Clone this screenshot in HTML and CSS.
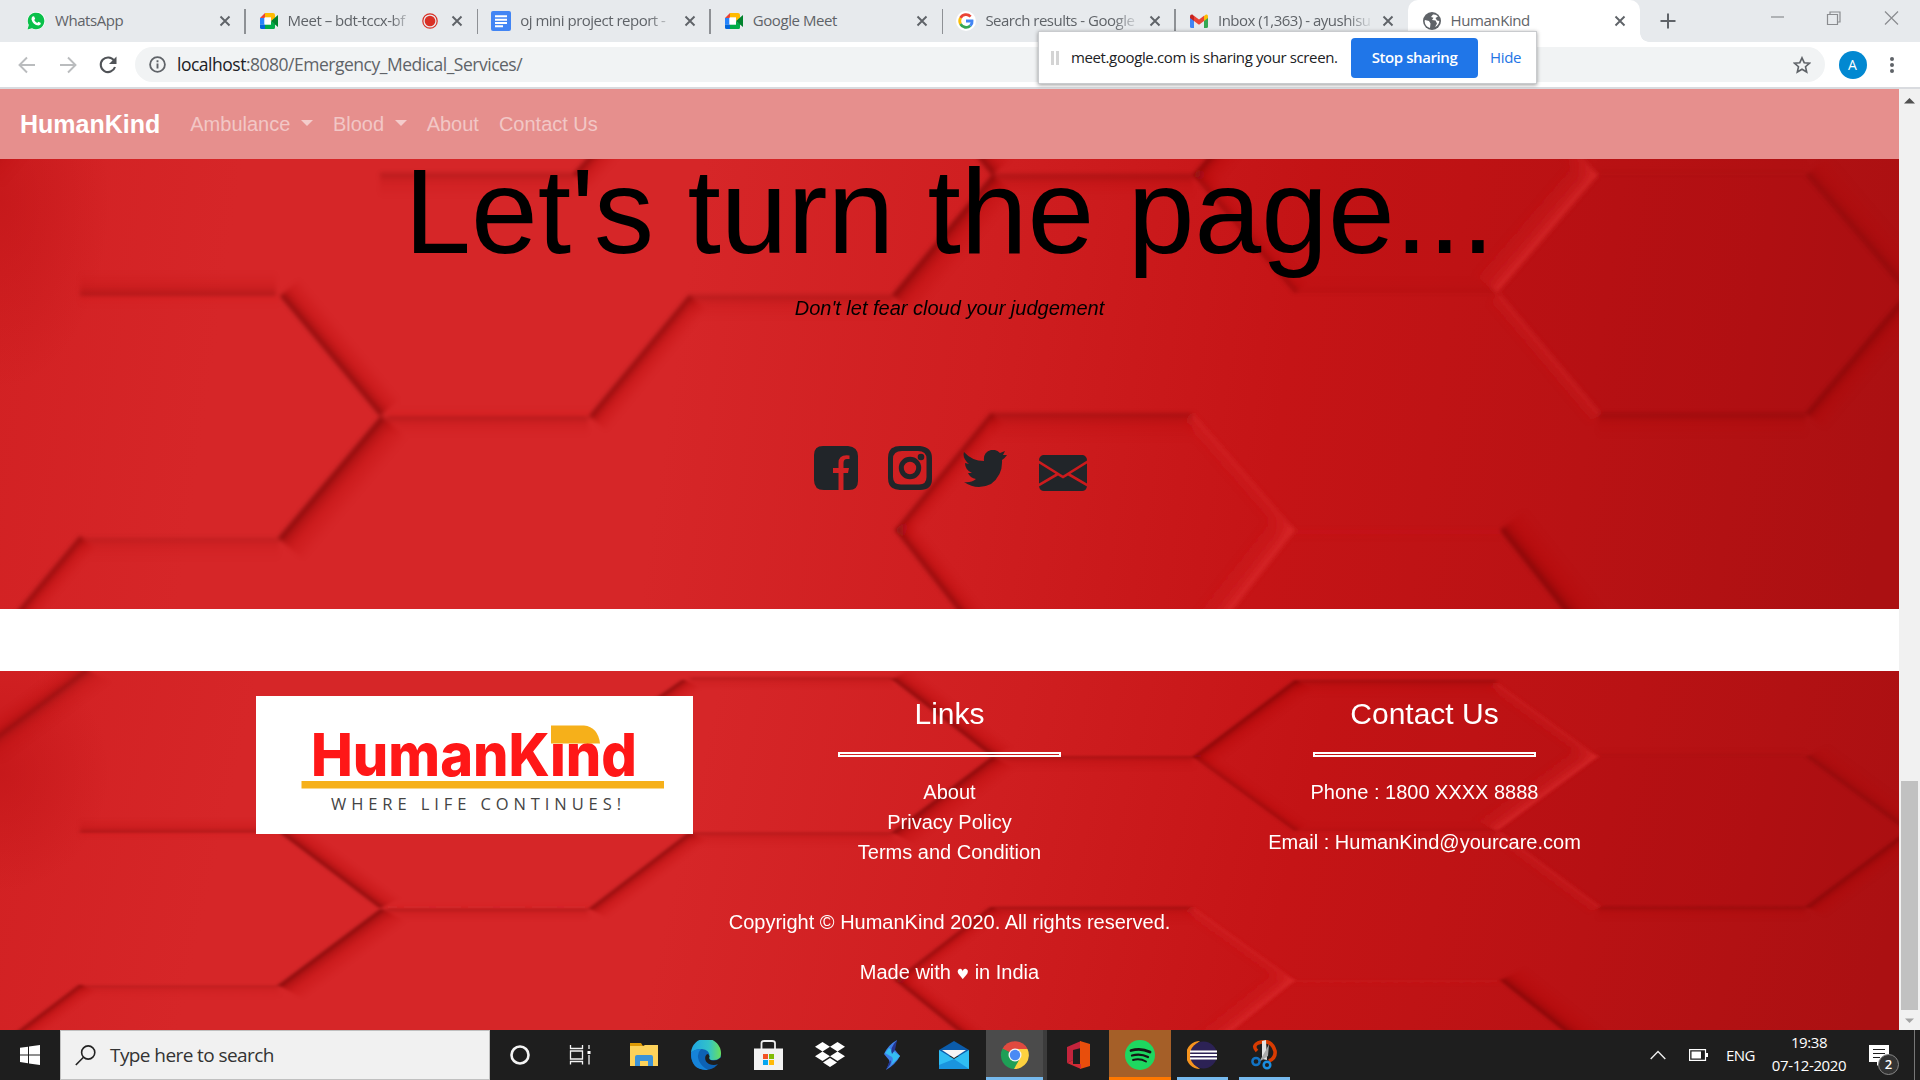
FILE: index.html
```html
<!DOCTYPE html>
<html lang="en">
<head>
<meta charset="utf-8">
<title>HumanKind</title>
<link rel="stylesheet" href="styles.css">
</head>
<body>
<svg class="defs" width="0" height="0" aria-hidden="true">
  <defs>
    <linearGradient id="base" gradientUnits="userSpaceOnUse" x1="0" y1="250" x2="1880" y2="520">
      <stop offset="0" stop-color="#d22123"/><stop offset=".12" stop-color="#d62628"/><stop offset=".36" stop-color="#d62628"/>
      <stop offset=".52" stop-color="#cf1e20"/><stop offset=".68" stop-color="#c51416"/><stop offset=".84" stop-color="#b91214"/><stop offset="1" stop-color="#ab1012"/>
    </linearGradient>
    <radialGradient id="corner" gradientUnits="userSpaceOnUse" cx="0" cy="0" r="1" gradientTransform="translate(0 200) scale(110 190)">
      <stop offset="0" stop-color="#b90f12" stop-opacity=".45"/><stop offset="1" stop-color="#b90f12" stop-opacity="0"/>
    </radialGradient>
    <linearGradient id="gs" x1="0" y1="0" x2="0" y2="1">
      <stop offset="0" stop-color="#5c0a08" stop-opacity=".72"/><stop offset=".22" stop-color="#8f0a0b" stop-opacity=".46"/>
      <stop offset=".5" stop-color="#b00b0e" stop-opacity=".25"/><stop offset="1" stop-color="#b80c10" stop-opacity="0"/>
    </linearGradient>
    <linearGradient id="gl" x1="0" y1="0" x2="0" y2="1">
      <stop offset="0" stop-color="#e53436" stop-opacity=".6"/><stop offset=".35" stop-color="#dc2a2c" stop-opacity=".28"/><stop offset="1" stop-color="#d82426" stop-opacity="0"/>
    </linearGradient>
    <filter id="soft" x="-5%" y="-5%" width="110%" height="110%"><feGaussianBlur stdDeviation="2"/></filter>
    <rect id="s" width="1" height="1" fill="url(#gs)"/>
    <rect id="l" width="1" height="1" fill="url(#gl)"/>
    <g id="hexes">
      <rect y="39" width="1899" height="570" fill="url(#base)"/>
      <rect y="39" width="200" height="450" fill="url(#corner)"/>
      <path d="M1295 57H1497L1598 175L1497 293H1295L1193 175Z" fill="#b80a0e" opacity=".08"/>
      <path d="M1598 175H1806L1907 293L1806 413H1598L1497 293Z" fill="#a80a0d" opacity=".12"/>
      <g filter="url(#soft)">
        <use href="#s" transform="matrix(-100 -120 20 -17 380 416)"/>
        <use href="#s" transform="matrix(103 -122 26 22 278 538)"/>
        <use href="#s" opacity=".3" transform="matrix(199 0 0 22 80 538)"/>
        <use href="#s" transform="matrix(100 -120 16 13 -20 656)"/>
        <use href="#s" opacity=".5" transform="matrix(-196 0 0 -24 276 296)"/>
        <use href="#s" opacity=".45" transform="matrix(202 0 0 20 386 416)"/>
        <use href="#s" transform="matrix(100 -121 18 15 589 416)"/>
        <use href="#s" opacity=".4" transform="matrix(203 0 0 24 690 295)"/>
        <use href="#s" transform="matrix(100 -120 24 20 892 295)"/>
        <use href="#s" opacity=".4" transform="matrix(195 0 0 24 380 173)"/>
        <use href="#s" transform="matrix(110 -122 18 15 573 174)"/>
        <use href="#s" opacity=".4" transform="matrix(203 0 0 20 690 49)"/>
        <use href="#s" transform="matrix(96 -117 14 12 895 530)"/>
        <use href="#s" transform="matrix(-94 -120 16 -13 989 650)"/>
        <use href="#s" opacity=".5" transform="matrix(202 0 0 28 991 413)"/>
        <use href="#s" opacity=".5" transform="matrix(202 0 0 24 991 174)"/>
        <use href="#s" transform="matrix(-100 -123 20 -17 992 175)"/>
        <use href="#s" transform="matrix(102 -122 20 16 1193 175)"/>
        <use href="#s" opacity=".7" transform="matrix(-102 -118 14 -12 1295 293)"/>
        <use href="#s" opacity=".15" transform="matrix(202 0 0 -16 1295 293)"/>
        <use href="#s" opacity=".5" transform="matrix(202 0 0 28 1295 53)"/>
        <use href="#s" opacity=".9" transform="matrix(-95 -120 26 -21 1595 650)"/>
        <use href="#s" opacity=".5" transform="matrix(208 0 0 24 1598 413)"/>
        <use href="#s" opacity=".8" transform="matrix(101 -120 20 17 1806 413)"/>
        <use href="#s" opacity=".55" transform="matrix(-101 -118 24 -20 1907 293)"/>
        <use href="#s" opacity=".15" transform="matrix(208 0 0 -14 1598 174)"/>
        <use href="#s" opacity=".5" transform="matrix(108 -128 24 20 -20 166)"/>
        <use href="#s" opacity=".7" transform="matrix(-108 128 -20 -17 88 38)"/>
        <use href="#l" opacity=".6" transform="matrix(102 117 -14 12 1193 413)"/>
        <use href="#l" transform="matrix(-102 130 -24 -19 1295 530)"/>
        <use href="#l" transform="matrix(-101 118 -24 -20 1598 175)"/>
        <use href="#l" opacity=".6" transform="matrix(101 120 -14 12 1500 293)"/>
        <use href="#l" opacity=".6" transform="matrix(101 118 -14 12 1497 57)"/>
        <use href="#l" opacity=".3" transform="matrix(205 0 0 10 1295 530)"/>
        <use href="#l" opacity=".2" transform="matrix(199 0 0 10 80 297)"/>
        <use href="#l" opacity=".25" transform="matrix(202 0 0 -8 388 415)"/>
      </g>
    </g>
    <symbol id="x" viewBox="0 0 12 12"><path d="M1.5 1.5l9 9m0-9l-9 9" stroke="#5f6368" stroke-width="1.9" fill="none"/></symbol>
    <symbol id="meet" viewBox="0 0 20 20">
      <path d="M6 2H14a2 2 0 0 1 2 2V7L12 10V6.5H6Z" fill="#ffba00"/><path d="M1 7L6 2V7Z" fill="#ea4335"/>
      <path d="M1 7H5.5V13.5H1Z" fill="#2684fc"/><path d="M1 13.5H6V18H2.500a1.500 1.500 0 0 1-1.500-1.500Z" fill="#0066da"/>
      <path d="M6 13.500H12V10L16 13V16.500a1.500 1.500 0 0 1-1.500 1.500H6Z" fill="#00ac47"/><path d="M12 10L19 4V16L16 13.500Z" fill="#00832d"/>
      <path d="M5.500 6.500H12V13.500H5.500Z" fill="#fff"/>
    </symbol>
  </defs>
</svg>

<div class="screen">
  <header class="tabs">
    <div class="tab">
      <svg class="fav" viewBox="0 0 20 20"><path d="M1 19L2.400 14.200A9 9 0 1 1 6 17.700Z" fill="#fff"/><path d="M1.500 18.500L2.800 14A8.300 8.300 0 1 1 6 17.200Z" fill="#0ac04a"/><path d="M6.500 5.500l1.500-.3 1.200 2.600-1 1.300q1 2 3 2.900l1.200-1.200 2.500 1.200q0 2.300-2.400 2.500Q7 14 5.500 8.500 5.400 6.500 6.500 5.500Z" fill="#fff"/></svg>
      <span class="title">WhatsApp</span><svg class="close"><use href="#x"/></svg>
    </div>
    <div class="tab sep">
      <svg class="fav"><use href="#meet"/></svg>
      <span class="title fade">Meet – bdt-tccx-bf</span>
      <svg class="rec" viewBox="0 0 16 16"><circle cx="8" cy="8" r="7.200" fill="none" stroke="#d93025" stroke-width="1.200"/><circle cx="8" cy="8" r="5.300" fill="#d93025"/></svg>
      <svg class="close"><use href="#x"/></svg>
    </div>
    <div class="tab sep">
      <svg class="fav" viewBox="0 0 20 20"><rect width="20" height="20" rx="2" fill="#4285f4"/><path d="M4 5.200h12M4 8.700h12M4 12h12M4 15.300h8" stroke="#fff" stroke-width="1.900"/></svg>
      <span class="title fade">oj mini project report -</span><svg class="close"><use href="#x"/></svg>
    </div>
    <div class="tab sep">
      <svg class="fav"><use href="#meet"/></svg>
      <span class="title">Google Meet</span><svg class="close"><use href="#x"/></svg>
    </div>
    <div class="tab sep">
      <svg class="fav" viewBox="0 0 20 20"><circle cx="10" cy="10" r="10" fill="#fff"/><g fill="none" stroke-width="2.800"><path d="M14.600 5.600A6.300 6.300 0 0 0 4.500 7" stroke="#ea4335"/><path d="M4.500 7A6.300 6.300 0 0 0 4.500 13" stroke="#fbbc05"/><path d="M4.500 13A6.300 6.300 0 0 0 14.300 14.700" stroke="#34a853"/><path d="M14.300 14.700Q16.500 12.500 16.100 10H10" stroke="#4285f4"/></g></svg>
      <span class="title fade">Search results - Google</span><svg class="close"><use href="#x"/></svg>
    </div>
    <div class="tab sep">
      <svg class="fav" viewBox="0 0 20 20"><path d="M1 6V15.500a1.500 1.500 0 0 0 1.500 1.500H5V8Z" fill="#4285f4"/><path d="M19 6V15.500a1.500 1.500 0 0 1-1.500 1.500H15V8Z" fill="#34a853"/><path d="M15 5L17 3.500Q19 3 19 5.500V7L15 10Z" fill="#fbbc04"/><path d="M1 5.500Q1 3 3.500 3.500L5 5V10L1 7Z" fill="#c5221f"/><path d="M5 4.800L10 8.600 15 4.800V10L10 13.800 5 10Z" fill="#ea4335"/></svg>
      <span class="title fade">Inbox (1,363) - ayushisu</span><svg class="close"><use href="#x"/></svg>
    </div>
    <div class="tab active">
      <svg class="fav" viewBox="0 0 20 20"><circle cx="10" cy="10" r="9" fill="#5f6368"/><path d="M3 9l4 1 1.500 2.500L8 17Q3 15.500 2.600 10ZM11 3.500L9 6l2.500.8L10 9l3.500.5 1.500 3-2 3.500Q17 14 17.300 10L15 9.500 13.500 7 16 5.500Q14 3 11 3.500Z" fill="#fff"/></svg>
      <span class="title">HumanKind</span><svg class="close"><use href="#x"/></svg>
    </div>
    <svg class="plus" viewBox="0 0 16 16"><path d="M8 .5v15M.5 8h15" stroke="#5f6368" stroke-width="2"/></svg>
    <svg class="winctl" viewBox="0 0 130 16"><g fill="none" stroke="#8a8c8f" stroke-width="1.200"><path d="M1 7h13"/><path d="M57.500 4.500h10v10h-10zM60 4.500V2h10v10h-2.500"/><path d="M115 1.500l13 13m0-13l-13 13"/></g></svg>
  </header>

  <div class="toolbar">
    <svg class="nav-ic" viewBox="0 0 18 18"><path d="M17 9H2M9 1.500L1.500 9 9 16.500" fill="none" stroke="#babcbe" stroke-width="1.900"/></svg>
    <svg class="nav-ic" viewBox="0 0 18 18"><path d="M1 9h15M9 1.500L16.500 9 9 16.500" fill="none" stroke="#babcbe" stroke-width="1.900"/></svg>
    <svg class="nav-ic" viewBox="0 0 18 18"><path d="M15 4.500A7.300 7.300 0 1 0 16 11" fill="none" stroke="#505357" stroke-width="2.100"/><path d="M17.500 .5V8H10Z" fill="#505357"/></svg>
    <div class="omnibox">
      <svg width="17" height="17" viewBox="0 0 17 17"><circle cx="8.500" cy="8.500" r="7.400" fill="none" stroke="#5f6368" stroke-width="1.800"/><path d="M8.500 7.500V12.500M8.500 4.300v1.900" stroke="#5f6368" stroke-width="1.900"/></svg>
      <span class="url"><b>localhost</b>:8080/Emergency_Medical_Services/</span>
      <svg width="18" height="18" viewBox="0 0 18 18"><path d="M9 1.800l2.200 4.900 5.300.5-4 3.500 1.200 5.300L9 13.200 4.300 16l1.200-5.300-4-3.500 5.300-.5Z" fill="none" stroke="#5f6368" stroke-width="1.600"/></svg>
    </div>
    <span class="avatar">A</span>
    <svg class="dots" width="6" height="18" viewBox="0 0 6 18"><g fill="#5f6368"><circle cx="3" cy="3" r="2"/><circle cx="3" cy="9" r="2"/><circle cx="3" cy="15" r="2"/></g></svg>
  </div>

  <div class="share">
    <i class="grip"></i><span class="share-text">meet.google.com is sharing your screen.</span>
    <span class="stop">Stop sharing</span><span class="hide">Hide</span>
  </div>

  <main class="view">
    <div class="page">
      <nav class="navbar">
        <span class="brand">HumanKind</span>
        <span class="link">Ambulance <i class="caret"></i></span>
        <span class="link">Blood <i class="caret"></i></span>
        <span class="link">About</span>
        <span class="link">Contact Us</span>
      </nav>
      <section class="hero stack">
        <svg class="bg" viewBox="0 159 1899 450" preserveAspectRatio="none"><use href="#hexes"/></svg>
        <div class="hero-body">
          <h1>Let's turn the page...</h1>
          <p class="quote">Don't let fear cloud your judgement</p>
          <div class="social">
            <svg width="44" height="45" viewBox="0 0 44 45"><path fill-rule="evenodd" d="M9 0H34Q44 1 44 10V35Q44 44 35 44H29.500V27H34L35 22H29.500V17Q29.500 13 33 13H35.500V9.500Q24.500 8 24.500 17V22H19V27H24.500V44H10Q0 44 0 34V9Q0 0 9 0Z"/></svg>
            <svg width="44" height="45" viewBox="0 0 44 45"><path fill-rule="evenodd" d="M12 0H32Q44 1 44 12V33Q44 44 32 44H12Q0 44 0 32V12Q0 0 12 0ZM14 5Q5 5 5 13V31Q5 38.500 13 38.500H31Q38.500 38.500 38.500 31V13Q38.500 5 30 5Z"/><circle cx="22" cy="22" r="8.700" fill="none" stroke="#212529" stroke-width="5"/><circle cx="33" cy="11" r="3.300"/></svg>
            <svg class="bird" width="44" height="38" viewBox="0 0 44 38"><path d="M1 2Q9 11 21 11Q20 2 28 0Q33-1 37 3L42 1 40 5 44 5Q42 8 39 10Q40 25 28 34Q14 41 1 32Q8 33 13 29Q7 28 5 23H9Q2 20 2 13L6 14Q-1 8 1 2Z"/></svg>
            <svg width="48" height="36" viewBox="0 0 48 36"><path d="M4 0H44Q48 1 48 5.500L26.500 19 24 20.500 21.500 19 0 5.500Q0 1 4 0ZM0 8.500L16.500 18.800 0 28.500ZM48 8.500V28.500L31.500 18.800ZM19 20.500L24 23.500 29 20.500 48 31.500Q47 36 43 36H5Q1 36 0 31.500Z"/></svg>
          </div>
        </div>
      </section>
      <div class="gap"></div>
      <footer class="foot stack">
        <svg class="bg" viewBox="0 39 1899 570" preserveAspectRatio="none"><use href="#hexes"/></svg>
        <div class="foot-body">
          <div class="cols">
            <div class="col logo-col">
              <svg class="logo" width="437" height="138" viewBox="0 0 437 138">
                <rect width="437" height="138" fill="#fff"/>
                <text x="55" y="80" class="logo-name" textLength="326" lengthAdjust="spacingAndGlyphs">HumanKind</text>
                <path d="M295 29.500H328Q342 31 344 47.500H295Z" fill="#f6b01a"/>
                <rect x="45.500" y="85" width="362.500" height="7.500" fill="#f6b01a"/>
                <text x="75" y="114" class="logo-tag" textLength="290">WHERE LIFE CONTINUES!</text>
              </svg>
            </div>
            <div class="col"><h2>Links</h2><div class="rule"></div><p class="list">About<br>Privacy Policy<br>Terms and Condition</p></div>
            <div class="col"><h2>Contact Us</h2><div class="rule"></div><p>Phone : 1800 XXXX 8888</p><p>Email : HumanKind@yourcare.com</p></div>
          </div>
          <p class="copy">Copyright © HumanKind 2020. All rights reserved.</p>
          <p>Made with <span class="heart">♥</span> in India</p>
        </div>
      </footer>
    </div>
    <div class="scroll">
      <svg width="21" height="24" viewBox="0 0 21 24"><path d="M5 14.500L10.500 9 16 14.500Z" fill="#505050"/></svg>
      <i class="thumb"></i>
      <svg width="21" height="20" viewBox="0 0 21 20"><path d="M6 8.500L10.500 13 15 8.500Z" fill="#a3a3a3"/></svg>
    </div>
  </main>

  <footer class="taskbar">
    <div class="start"><svg width="20" height="20" viewBox="0 0 20 20"><path d="M0 2.800L8 1.700V9.400H0ZM9 1.500L20 0V9.400H9ZM0 10.400H8V18.200L0 17.100ZM9 10.400H20V20L9 18.400Z" fill="#fff"/></svg></div>
    <div class="search">
      <svg width="21" height="21" viewBox="0 0 21 21"><circle cx="13.200" cy="7.500" r="6.600" fill="none" stroke="#222" stroke-width="1.600"/><path d="M8.500 12.200L.8 20" stroke="#222" stroke-width="1.600"/></svg>
      <span>Type here to search</span>
    </div>
    <div class="apps">
      <div class="app"><svg width="30" height="30" viewBox="0 0 30 30"><circle cx="15" cy="15" r="8.500" fill="none" stroke="#f4f4f4" stroke-width="2.600"/></svg></div>
      <div class="app tv"><svg width="30" height="30" viewBox="0 0 30 30"><g fill="none" stroke="#f4f4f4" stroke-width="1.300"><path d="M5.500 5V8.500H17.500V5M5.500 24.500V21.500H17.500V24.500M5.500 11H17.500V19H5.500ZM24 5V9M24 15V24.500"/></g><rect x="22.500" y="11" width="3" height="3" fill="#fff"/></svg></div>
      <div class="app"><svg width="30" height="30" viewBox="0 0 30 30"><path d="M1 3H12L14 6H1Z" fill="#dd9a05"/><path d="M1 6H14L16 5H29V26H1Z" fill="#fdd25a"/><path d="M6 26V17Q6 15 8 15H22Q24 15 24 17V26H19V21H11V26Z" fill="#3c93d8"/></svg></div>
      <div class="app"><svg width="30" height="30" viewBox="0 0 30 30"><defs><linearGradient id="e1"><stop offset="0" stop-color="#1fa5e4"/><stop offset=".6" stop-color="#33c3c8"/><stop offset="1" stop-color="#6ae05a"/></linearGradient></defs><circle cx="15" cy="15" r="15" fill="#0d62b5"/><path d="M0 13A15 15 0 0 1 30 14Q30 20 22 20 17 20 18.500 16.500 19 10 11 9 3 9 0 13Z" fill="url(#e1)"/><path d="M0 13Q3 9 10 9 5 14 8 21 11 27 17 29.800 0 31 0 13Z" fill="#1683d8"/><path d="M18.500 16.500Q17 20 22 20.500 26 21 30 17.500L31 24 27 24Q23 26 18 24 13 21 14.500 16 17 12 18.500 16.500Z" fill="#1e1e1e"/></svg></div>
      <div class="app"><svg width="30" height="30" viewBox="0 0 30 30"><path d="M8.500 9V3Q8.500 1 11 1H19Q22 1 22 3V9" fill="none" stroke="#eee" stroke-width="1.800"/><path d="M1 8.500H30V30H1Z" fill="#f2f2f2"/><path d="M10 14h5v5h-5z" fill="#f35325"/><path d="M16 14h5v5h-5z" fill="#81bc06"/><path d="M10 20h5v5h-5z" fill="#05a6f0"/><path d="M16 20h5v5h-5z" fill="#ffba08"/></svg></div>
      <div class="app"><svg width="30" height="30" viewBox="0 0 30 30"><path d="M7.500 2L15 6.700 7.500 11.500 0 6.700ZM22.500 2L30 6.700 22.500 11.500 15 6.700ZM7.500 11.500L15 16.200 7.500 21 0 16.200ZM22.500 11.500L30 16.200 22.500 21 15 16.200ZM15 18L22 22.500 15 27 8 22.500Z" fill="#fff"/></svg></div>
      <div class="app"><svg width="30" height="30" viewBox="0 0 30 30"><path d="M20 0Q17 7 18 10L23 16Q19 24 9 30 13 23 12 20L7 14Q11 5 20 0Z" fill="#3f7fe8"/><path d="M12 8L23 16Q20 20 14 25 17 19 15 17L8 13Z" fill="#35bdf2"/><path d="M20 0Q12 9 15 14L18 10ZM9 30Q16 22 13 20Z" fill="#24358f"/></svg></div>
      <div class="app"><svg width="30" height="30" viewBox="0 0 30 30"><path d="M0 10L15 1 30 10V16H0Z" fill="#0b5cab"/><path d="M0 10L15 19 30 10V29H0Z" fill="#2fbdf3"/><path d="M3 10H27L15 18Z" fill="#f5f5f5"/><path d="M15 19L30 29H0V25Z" fill="#1a94de"/></svg></div>
      <div class="app chrome"><svg width="30" height="30" viewBox="0 0 30 30"><path d="M15 15L2.500 9A14 14 0 0 1 27.500 9Z" fill="#e04a3f"/><path d="M15 15V9H27.500A14 14 0 0 1 14 29Z" fill="#fdd13f"/><path d="M15 15L19 20 14 29A14 14 0 0 1 2.500 8.500Z" fill="#1f9f56"/><circle cx="15" cy="15" r="6.500" fill="#f4f4f4"/><circle cx="15" cy="15" r="5.200" fill="#4a8af4"/></svg></div>
      <div class="app"><svg width="30" height="30" viewBox="0 0 30 30"><path d="M4 7L18 1V8L10 10V20L4 23Z" fill="#c4243c"/><path d="M17 1L27 4V26L17 29Z" fill="#e84e0c"/><path d="M4 23L10 20 10 24 18 24V29Z" fill="#d22b36"/></svg></div>
      <div class="app spot"><svg width="30" height="30" viewBox="0 0 30 30"><circle cx="15" cy="15" r="15" fill="#1ed760"/><g fill="none" stroke="#151515" stroke-linecap="round"><path d="M6 10.500Q16 7.500 25 12" stroke-width="2.800"/><path d="M7 15.500Q15.500 13 23 17" stroke-width="2.300"/><path d="M8 20Q15 18 21 21.500" stroke-width="1.900"/></g></svg></div>
      <div class="app run"><svg width="30" height="30" viewBox="0 0 30 30"><path d="M13 1A14 14 0 0 0 13 29 17 17 0 0 1 13 1Z" fill="#f7941e"/><circle cx="16.500" cy="15" r="13.500" fill="#2c2255"/><path d="M3 11.500H30M3 15H30M3 18.500H30" stroke="#fff" stroke-width="1.900"/></svg></div>
      <div class="app run"><svg width="30" height="30" viewBox="0 0 30 30"><path d="M8 11Q3 6 9 3 22-2 26 11 27 18 20 21" fill="none" stroke="#d83b01" stroke-width="3.600"/><path d="M13 1L17 0 18 20 13 19Z" fill="#e4e4e4"/><path d="M17 10L20 4 19 16 10 22Z" fill="#aaa"/><circle cx="7" cy="21.500" r="3.600" fill="none" stroke="#1273c4" stroke-width="2.500"/><circle cx="18" cy="25" r="3.300" fill="none" stroke="#1a8ee0" stroke-width="2.500"/></svg></div>
    </div>
    <div class="tray">
      <svg width="16" height="10" viewBox="0 0 16 10"><path d="M.7 9L8 1.500 15.300 9" fill="none" stroke="#eee" stroke-width="1.400"/></svg>
      <svg class="bat" width="19" height="12" viewBox="0 0 19 12"><path d="M.6 .6H16.500V11.400H.6Z" fill="none" stroke="#fff" stroke-width="1.200"/><path d="M2.500 2.500H12V9.500H2.500ZM17 4h2v4h-2z" fill="#fff"/></svg>
      <span class="lang">ENG</span>
      <span class="clock">19:38<br>07-12-2020</span>
      <span class="note"><svg width="20" height="21" viewBox="0 0 20 21"><path d="M0 0H20V17H12L8 21V17H0Z" fill="#fff"/><path d="M4 4.500H16M4 8.500H16M4 12.500H11" stroke="#1e1e1e" stroke-width="1.200"/></svg><b class="badge">2</b></span>
    </div>
  </footer>
</div>
</body>
</html>
```
FILE: styles.css
```css
* { box-sizing: border-box; }
body { margin: 0; font-family: "Liberation Sans", Arial, sans-serif; overflow: hidden; }
.defs { display: block; height: 0; }
svg { flex: none; display: block; }
.screen { width: 1920px; height: 1080px; display: flex; flex-direction: column; position: relative; }
.tabs, .toolbar, .share, .taskbar { font-family: "Open Sans", "Noto Sans", sans-serif; }

/* browser tabs */
.tabs { height: 42px; flex: none; background: #e7eaed; display: flex; align-items: center; padding-left: 12px; }
.tab { width: 232.6px; height: 42px; display: flex; align-items: center; padding: 0 14px; }
.sep::before { content: ""; width: 1.5px; height: 25px; background: #8e9195; margin: 0 13px 0 -14.5px; flex: none; }
.active { background: #fff; border-radius: 10px 10px 0 0; position: relative; }
.active::after { content: ""; position: absolute; right: -9px; bottom: 0; width: 9px; height: 9px; background: radial-gradient(circle at 100% 0, transparent 8.5px, #fff 9px); }
.fav { width: 20px; height: 20px; margin-right: 9px; }
.title { flex: 1; min-width: 0; overflow: hidden; white-space: nowrap; font-size: 15px; letter-spacing: -.42px; color: #5f6368; line-height: 22px; margin: -2px 8px 0 0; }
.fade { -webkit-mask-image: linear-gradient(90deg, #000 82%, transparent 100%); mask-image: linear-gradient(90deg, #000 82%, transparent 100%); letter-spacing: -.5px; }
.rec { width: 16px; height: 16px; margin-right: 13px; }
.close { width: 12px; height: 12px; }
.plus { width: 16px; height: 16px; margin-left: 20px; }
.winctl { width: 130px; height: 16px; margin: -6px 20px 0 auto; }

/* toolbar */
.toolbar { height: 47px; flex: none; background: #fff; border-bottom: 2px solid #d9dbdf; display: flex; align-items: center; padding-left: 18px; }
.nav-ic { width: 18px; height: 18px; margin-right: 22.5px; }
.omnibox { width: 1690px; height: 35px; margin-left: -5px; border-radius: 18px; background: #f1f3f4; display: flex; align-items: center; padding: 0 14px; }
.url { flex: 1; margin: -2px 0 0 11.5px; font-size: 17.5px; letter-spacing: -.49px; color: #5f6368; }
.url b { font-weight: 400; color: #202124; }
.avatar { width: 28px; height: 28px; margin-left: 14px; border-radius: 50%; background: #0288d1; color: #fff; font-size: 14px; line-height: 28px; text-align: center; }
.dots { margin-left: 22px; }

/* screen sharing notice */
.share { position: absolute; left: 1038px; top: 31px; width: 499px; height: 53px; background: #fff; border: 1px solid #c9cbce; box-shadow: 0 1px 4px rgba(0,0,0,.4); display: flex; align-items: center; padding-left: 12px; font-size: 15px; color: #202124; white-space: nowrap; z-index: 5; }
.grip { width: 8px; height: 14px; border: solid #d4d4d4; border-width: 0 3px; margin-right: 12px; }
.share-text { width: 280px; letter-spacing: -.38px; margin-top: -2px; }
.stop { width: 127px; height: 40px; border-radius: 4px; background: #2076e8; color: #fff; font-weight: 600; line-height: 38px; text-align: center; letter-spacing: -.42px; }
.hide { color: #2474e5; margin: -2px 0 0 12px; letter-spacing: -.3px; }

/* page */
.view { height: 941px; flex: none; display: flex; }
.page { width: 1899px; display: flex; flex-direction: column; }
.navbar { height: 70px; flex: none; background: #e68f8d; display: flex; align-items: center; padding-left: 20px; }
.brand { color: #fff; font-size: 25px; font-weight: 700; margin-right: 20px; }
.link { font-size: 20px; color: rgba(255,255,255,.5); padding: 0 10px; white-space: nowrap; }
.caret { display: inline-block; margin-left: 5px; vertical-align: 5px; border: solid transparent; border-width: 6px 6px 0; border-top-color: rgba(255,255,255,.55); }
.stack { display: grid; }
.stack > * { grid-area: 1 / 1; }
.bg { width: 1899px; height: 100%; }
.hero { height: 450px; grid-template-rows: 450px; }
.hero-body { display: flex; flex-direction: column; align-items: center; color: #000; z-index: 1; }
h1 { margin: -20px 0 0; font-size: 120px; line-height: 144px; font-weight: 400; white-space: nowrap; }
.quote { margin: 10px 0 0; font-size: 20px; line-height: 30px; font-style: italic; }
.social { display: flex; align-items: flex-end; margin: 124px 0 0 1px; height: 44px; gap: 30px; fill: #212529; }
.bird { margin: 0 2px 3px 1px; }
.gap { height: 62px; background: #fff; flex: none; }
.foot { height: 359px; grid-template-rows: 359px; }
.foot-body { z-index: 1; color: #fff; text-align: center; font-size: 20px; line-height: 30px; padding-top: 25px; }
.cols { display: grid; grid-template-columns: 475px 475px 475px; justify-content: center; height: 211px; }
.logo-name { font-family: Inter, sans-serif; font-weight: 800; font-size: 59px; fill: #ff1717; }
.logo-tag { font-family: "Open Sans", sans-serif; font-size: 16.5px; fill: #444; }
.logo-col { padding-left: 19px; }
h2 { margin: 0; font-size: 30px; line-height: 36px; font-weight: 400; }
.rule { width: 223px; height: 5px; margin: 20px auto; border: 2px solid #fff; }
p { margin: 0 0 20px; }
.heart { font-family: "DejaVu Sans", sans-serif; font-size: 14px; line-height: 1; }
.scroll { width: 21px; background: #f1f1f1; display: flex; flex-direction: column; align-items: center; }
.thumb { width: 17px; height: 229px; background: #c1c1c1; margin-top: auto; }

/* taskbar */
.taskbar { height: 50px; flex: none; background: #1e1e1e; display: flex; color: #fff; }
.start { width: 60px; display: flex; align-items: center; justify-content: center; }
.search { width: 430px; background: #f1f1f1; border: 1px solid #c0c0c0; display: flex; align-items: center; padding-left: 14px; gap: 14px; color: #333; font-size: 19px; letter-spacing: -.58px; }
.apps { display: flex; margin-left: -1px; }
.app { width: 62px; display: flex; align-items: center; justify-content: center; }
.tv { padding-right: 4px; }
.chrome { width: 57px; margin: 0 4px 0 1px; background: linear-gradient(#76b9ed, #76b9ed) 0 100% / 100% 3px no-repeat #4b4b4b; box-shadow: 4px 0 #3c3c3c; }
.spot { background: linear-gradient(#ff7800, #ff7800) 0 100% / 100% 3px no-repeat #a55f28; }
.run { background: linear-gradient(#76b9ed, #76b9ed) 50% 100% / 51px 3px no-repeat; }
.tray { margin-left: auto; display: flex; align-items: center; padding-right: 31px; font-size: 15px; background: linear-gradient(#777, #777) calc(100% - 5px) 0 / 1px 100% no-repeat; }
.bat { margin-left: 23px; }
.lang { margin-left: 18px; width: 30px; letter-spacing: -.6px; }
.clock { margin: -2px 0 0 13px; width: 80px; text-align: center; line-height: 23px; letter-spacing: -.4px; white-space: nowrap; }
.note { margin-left: 20px; position: relative; }
.badge { position: absolute; left: 9px; top: 9px; width: 21px; height: 21px; border-radius: 50%; background: #333; border: 1px solid #888; font-size: 13px; font-weight: 600; line-height: 19px; text-align: center; }
```
